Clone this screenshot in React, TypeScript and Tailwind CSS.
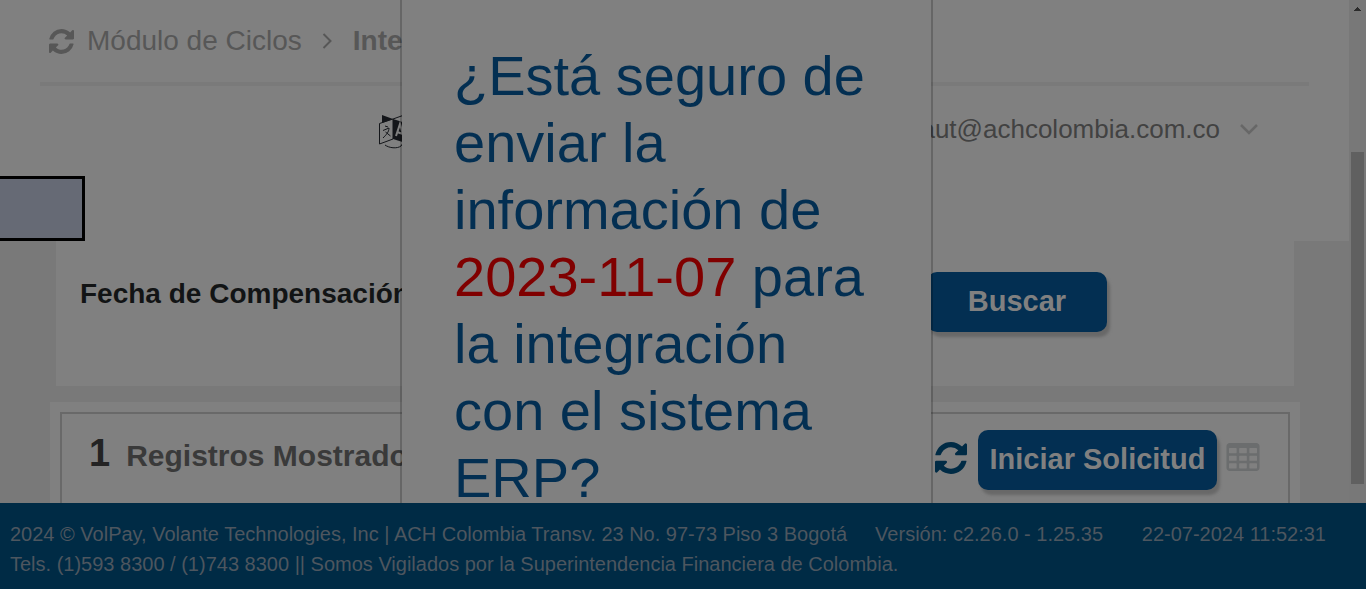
import React from "react";

function RefreshIcon({ className }: { className: string }) {
  return (
    <svg viewBox="0 0 1536 1536" className={className} fill="currentColor" aria-hidden="true">
      <path d="M1511 928q0 5-1 7-64 268-268 434.500T764 1536q-146 0-282.500-55T238 1324l-129 129q-19 19-45 19t-45-19-19-45V960q0-26 19-45t45-19h448q26 0 45 19t19 45-19 45l-137 137q71 66 161 102t187 36q134 0 250-65t186-179q11-17 53-117 8-23 30-23h192q13 0 22.500 9.500t9.500 22.500zm25-800v448q0 26-19 45t-45 19h-448q-26 0-45-19t-19-45 19-45l138-138Q969 256 768 256q-134 0-250 65T332 500q-11 17-53 117-8 23-30 23H50q-13 0-22.500-9.500T18 608v-7q65-268 270-434.500T768 0q146 0 284 55.500T1297 212l130-129q19-19 45-19t45 19 19 45z" />
    </svg>
  );
}

function TableIcon() {
  return (
    <svg viewBox="0 0 1664 1408" className="h-7 w-[34px]" fill="currentColor" aria-hidden="true">
      <path d="M512 1248v-192q0-14-9-23t-23-9H160q-14 0-23 9t-9 23v192q0 14 9 23t23 9h320q14 0 23-9t9-23zm0-384V672q0-14-9-23t-23-9H160q-14 0-23 9t-9 23v192q0 14 9 23t23 9h320q14 0 23-9t9-23zm512 384v-192q0-14-9-23t-23-9H672q-14 0-23 9t-9 23v192q0 14 9 23t23 9h320q14 0 23-9t9-23zM512 480V288q0-14-9-23t-23-9H160q-14 0-23 9t-9 23v192q0 14 9 23t23 9h320q14 0 23-9t9-23zm512 384V672q0-14-9-23t-23-9H672q-14 0-23 9t-9 23v192q0 14 9 23t23 9h320q14 0 23-9t9-23zm512 384v-192q0-14-9-23t-23-9h-320q-14 0-23 9t-9 23v192q0 14 9 23t23 9h320q14 0 23-9t9-23zm-512-768V288q0-14-9-23t-23-9H672q-14 0-23 9t-9 23v192q0 14 9 23t23 9h320q14 0 23-9t9-23zm512 384V672q0-14-9-23t-23-9h-320q-14 0-23 9t-9 23v192q0 14 9 23t23 9h320q14 0 23-9t9-23zm0-384V288q0-14-9-23t-23-9h-320q-14 0-23 9t-9 23v192q0 14 9 23t23 9h320q14 0 23-9t9-23zm128-320v1088q0 66-47 113t-113 47H160q-66 0-113-47T0 1248V160Q0 94 47 47T160 0h1344q66 0 113 47t47 113z" />
    </svg>
  );
}

function LanguageIcon() {
  return (
    <svg viewBox="0 0 44 36" className="h-9 w-11" fill="none" stroke="#14161a" aria-hidden="true">
      <path d="M4 1v8l11-4z" fill="#14161a" stroke="none" />
      <path d="M15 5v20l19 6V11z" fill="#14161a" stroke="none" />
      <path d="M1.500 9.500 15 5v20L1.500 30zM15 5l14-5v9" />
      <path d="M7 12l3 1M5 16.500l6-2.500c0 4-3 7-6 10M7.500 18l5 4M7 31c4 3 12 4 16 1l2-3m-1 0h2v3" />
      <path d="M18 22l4-12 4 14m-7-6 6 2" stroke="#808080" strokeWidth="2" />
    </svg>
  );
}

function PageScrollbar() {
  return (
    <div className="flex w-[17px] shrink-0 flex-col items-center bg-[#787878]" aria-hidden="true">
      <svg viewBox="0 0 7 4" className="mt-[7px] h-1 w-[7px]" fill="#2b2b2b">
        <path d="M3 0h1v1h1v1h1v1h1v1H0V3h1V2h1V1h1z" />
      </svg>
      <div className="mt-[141px] h-[332px] w-[13px] bg-[#606060]" />
    </div>
  );
}

const actionButton =
  "h-[60px] rounded-[10px] bg-[#032f52] text-[29px] font-bold text-[#808080] shadow-[3px_5px_3px_#686868]";

export default function App() {
  return (
    <div className="flex h-screen flex-col overflow-hidden bg-[#797979] font-['Liberation_Sans',Arial,sans-serif]">
      <div className="relative flex min-h-0 flex-1 overflow-hidden">
        <div className="min-w-0 flex-1">
          <header className="h-[241px] bg-[#808080]">
            <nav
              aria-label="Ruta"
              className="mx-10 flex h-[86px] items-center border-b-4 border-[#7a7a7a] pl-[9px] text-[28px] text-[#575757]"
            >
              <RefreshIcon className="size-[25px]" />
              <a href="#ciclos" className="ml-[13px] whitespace-nowrap">Módulo de Ciclos</a>
              <svg viewBox="0 0 10 16" className="mx-5 h-4 w-[11px]" fill="none" stroke="currentColor" strokeWidth="2" aria-hidden="true">
                <path d="M1 1l7 7-7 7" />
              </svg>
              <span className="font-bold">Integración</span>
            </nav>
            <div className="flex h-[86px] items-center justify-between pr-[91px] pl-[378px]">
              <button type="button" aria-label="Idioma" className="mt-[6px]">
                <LanguageIcon />
              </button>
              <button type="button" className="flex items-center gap-5 text-[26px] text-[#424242]">
                aut@achcolombia.com.co
                <svg viewBox="0 0 18 11" className="h-[11px] w-[18px]" fill="none" stroke="#676767" strokeWidth="2.5" aria-hidden="true">
                  <path d="M1 1l8 8 8-8" />
                </svg>
              </button>
            </div>
            <div className="mt-1 h-[65px] w-[85px] border-[3px] border-l-0 border-black bg-[#666a75]" />
          </header>

          <section className="mr-[55px] ml-14 flex h-[145px] justify-between bg-[#808080] pt-[31px] pr-[187px] pl-6">
            <h2 className="text-[28px] leading-[44px] font-bold whitespace-nowrap text-[#121415]">Fecha de Compensación</h2>
            <button type="button" className={`${actionButton} w-[180px]`}>Buscar</button>
          </section>

          <section className="mt-4 mr-[49px] ml-[50px] bg-[#808080] p-[10px]">
            <div className="flex h-[180px] items-start justify-between border-2 border-[#696969] pt-4 pr-7 pl-[27px]">
              <h3 className="flex items-baseline gap-4 leading-[46px] font-bold text-[#3a3a3a]">
                <span className="text-[38px] text-[#232323]">1</span>
                <span className="text-[30px]">Registros Mostrados</span>
              </h3>
              <div className="flex items-center text-[#002b45]">
                <button type="button" aria-label="Actualizar" className="mb-1">
                  <RefreshIcon className="size-8" />
                </button>
                <button type="button" className={`${actionButton} ml-[11px] w-[239px]`}>Iniciar Solicitud</button>
                <button type="button" aria-label="Ver tabla" className="mb-[6px] ml-[9px] text-[#6b6d6e]">
                  <TableIcon />
                </button>
              </div>
            </div>
          </section>
        </div>
        <PageScrollbar />

        <div className="absolute inset-0 flex justify-center pr-[33px]">
          <div role="dialog" aria-labelledby="confirm-title" className="w-[533px] border-x-2 border-black/20 bg-[#808080] bg-clip-padding pt-[42px] pr-[60px] pl-[52px]">
            <h1 id="confirm-title" className="text-[56px] leading-[67px] text-[#032f52]">
              ¿Está seguro de enviar la información de <span className="text-[#800000]">2023-11-07</span> para la integración con el sistema ERP?
            </h1>
          </div>
        </div>
      </div>

      <footer className="z-10 flex h-[86px] shrink-0 items-start bg-[#002b45] pt-4 pr-10 pl-[10px] text-[20px] leading-[30px] whitespace-nowrap text-[#4d565f]">
        <p>
          2024 © VolPay, Volante Technologies, Inc | ACH Colombia Transv. 23 No. 97-73 Piso 3 Bogotá
          <span className="ml-7">Versión: c2.26.0 - 1.25.35</span>
          <br />
          Tels. (1)593 8300 / (1)743 8300 || Somos Vigilados por la Superintendencia Financiera de Colombia.
        </p>
        <time className="ml-auto">22-07-2024 11:52:31</time>
      </footer>
    </div>
  );
}
